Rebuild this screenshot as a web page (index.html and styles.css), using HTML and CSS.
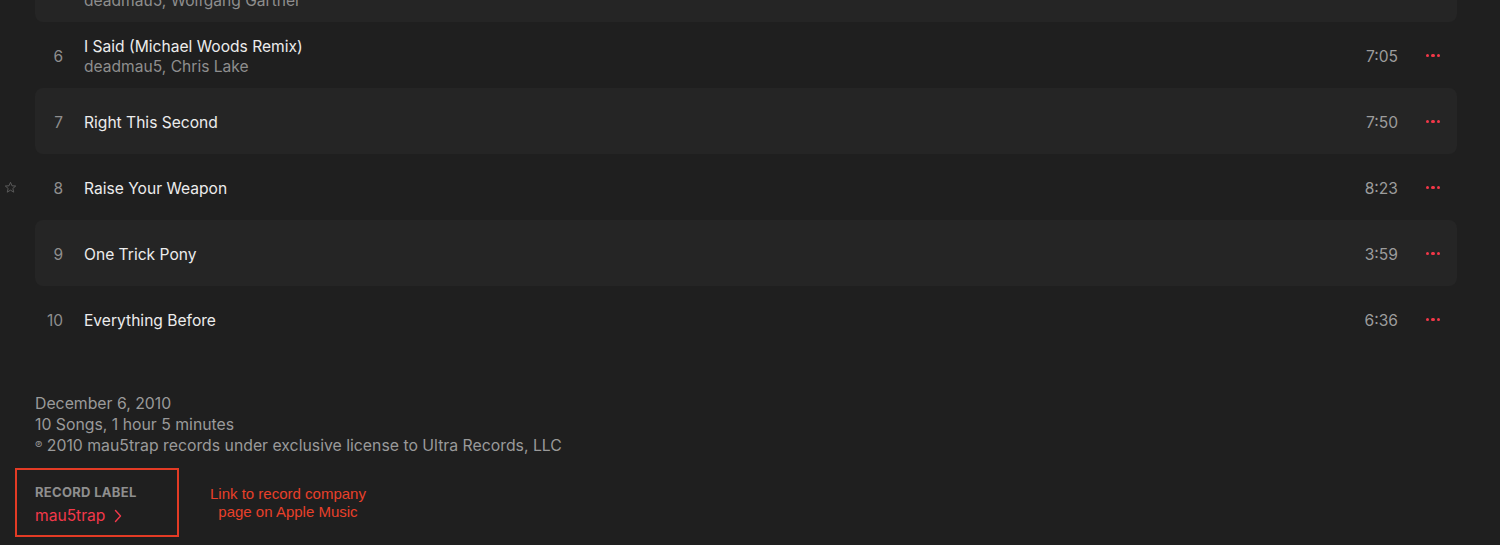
FILE: index.html
```html
<!DOCTYPE html>
<html lang="en">
<head>
<meta charset="utf-8">
<title>Album</title>
<link rel="stylesheet" href="styles.css">
</head>
<body>
<main class="page">
  <ol class="tracks">
    <li class="track alt">
      <span class="num">5</span>
      <div class="info"><span class="title">Hey Baby</span><span class="artist">deadmau5, Wolfgang Gartner</span></div>
      <span class="time">6:05</span>
      <span class="more"><i></i><i></i><i></i></span>
    </li>
    <li class="track">
      <span class="num">6</span>
      <div class="info"><span class="title">I Said (Michael Woods Remix)</span><span class="artist">deadmau5, Chris Lake</span></div>
      <span class="time">7:05</span>
      <span class="more"><i></i><i></i><i></i></span>
    </li>
    <li class="track alt">
      <span class="num">7</span>
      <div class="info"><span class="title">Right This Second</span></div>
      <span class="time">7:50</span>
      <span class="more"><i></i><i></i><i></i></span>
    </li>
    <li class="track">
      <svg class="star" viewBox="0 0 12 12" width="13" height="13"><path d="M6 1.2 L7.35 4.4 L10.8 4.65 L8.15 6.9 L9 10.3 L6 8.45 L3 10.3 L3.85 6.9 L1.2 4.65 L4.65 4.4 Z" fill="none" stroke="#5a5a5a" stroke-width="0.9" stroke-linejoin="round"/></svg>
      <span class="num">8</span>
      <div class="info"><span class="title">Raise Your Weapon</span></div>
      <span class="time">8:23</span>
      <span class="more"><i></i><i></i><i></i></span>
    </li>
    <li class="track alt">
      <span class="num">9</span>
      <div class="info"><span class="title">One Trick Pony</span></div>
      <span class="time">3:59</span>
      <span class="more"><i></i><i></i><i></i></span>
    </li>
    <li class="track">
      <span class="num">10</span>
      <div class="info"><span class="title">Everything Before</span></div>
      <span class="time">6:36</span>
      <span class="more"><i></i><i></i><i></i></span>
    </li>
  </ol>

  <section class="meta">
    <p>December 6, 2010</p>
    <p>10 Songs, 1 hour 5 minutes</p>
    <p><span class="p-mark">℗</span> 2010 mau5trap records under exclusive license to Ultra Records, LLC</p>
  </section>

  <section class="label-row">
    <div class="label-box">
      <div class="label-head">RECORD LABEL</div>
      <a class="label-link" href="#">mau5trap <svg viewBox="0 0 8 14" width="8" height="14"><path d="M1.5 1.5 L6.5 7 L1.5 12.5" fill="none" stroke="currentColor" stroke-width="1.4" stroke-linecap="round" stroke-linejoin="round"/></svg></a>
    </div>
    <div class="note">Link to record company<br>page on Apple Music</div>
  </section>
</main>
</body>
</html>
```
FILE: styles.css
```css
* { box-sizing: border-box; }
html, body { margin: 0; padding: 0; }
body {
  background: #1f1f1f;
  color: #ececec;
  font-family: Inter, "Liberation Sans", Arial, sans-serif;
  height: 545px;
  overflow: hidden;
}
.page {
  padding: 0 43px 0 35px;
}
.tracks {
  list-style: none;
  margin: -44px 0 0 0;
  padding: 0;
}
.track {
  position: relative;
  height: 66px;
  display: grid;
  grid-template-columns: 28px 1fr auto 16px;
  column-gap: 21px;
  align-items: center;
  padding: 3px 17px 0 0;
  border-radius: 8px;
}
.track.alt { background: #252525; }
.num {
  text-align: right;
  color: #8e8e8e;
  font-size: 15.5px;
}
.info {
  display: flex;
  flex-direction: column;
}
.title {
  font-size: 15.6px;
  line-height: 20px;
  color: #ececec;
}
.artist {
  font-size: 15.6px;
  line-height: 20px;
  color: #8e8e8e;
}
.time {
  color: #9c9c9c;
  font-size: 15.6px;
  justify-self: end;
  margin-right: 5px;
}
.more {
  display: flex;
  justify-content: flex-end;
  gap: 2px;
  margin-top: -2px;
}
.more i {
  display: block;
  width: 3.4px;
  height: 3.4px;
  border-radius: 50%;
  background: #f23848;
}
.star {
  position: absolute;
  left: -31px;
  top: 27px;
}
.meta {
  margin-top: 41px;
  color: #9a9a9a;
  font-size: 15.8px;
  line-height: 21px;
}
.meta p { margin: 0; }
.p-mark { font-size: 11px; vertical-align: 2px; }
.label-row {
  display: flex;
  align-items: center;
  margin-top: 12px;
  margin-left: -20px;
}
.label-box {
  width: 164px;
  height: 69px;
  border: 2px solid #e33b25;
  padding: 14px 0 0 18px;
}
.label-head {
  font-size: 13px;
  font-weight: 700;
  color: #8f8f8f;
  letter-spacing: 0.3px;
  line-height: 16px;
}
.label-link {
  display: inline-flex;
  align-items: center;
  gap: 9px;
  margin-top: 6px;
  color: #f2384a;
  text-decoration: none;
  font-size: 15.6px;
  line-height: 20px;
}
.note {
  margin-left: 31px;
  margin-top: 0;
  text-align: center;
  color: #e8402a;
  font-family: "Liberation Sans", Arial, sans-serif;
  font-size: 15px;
  line-height: 18px;
}
```
